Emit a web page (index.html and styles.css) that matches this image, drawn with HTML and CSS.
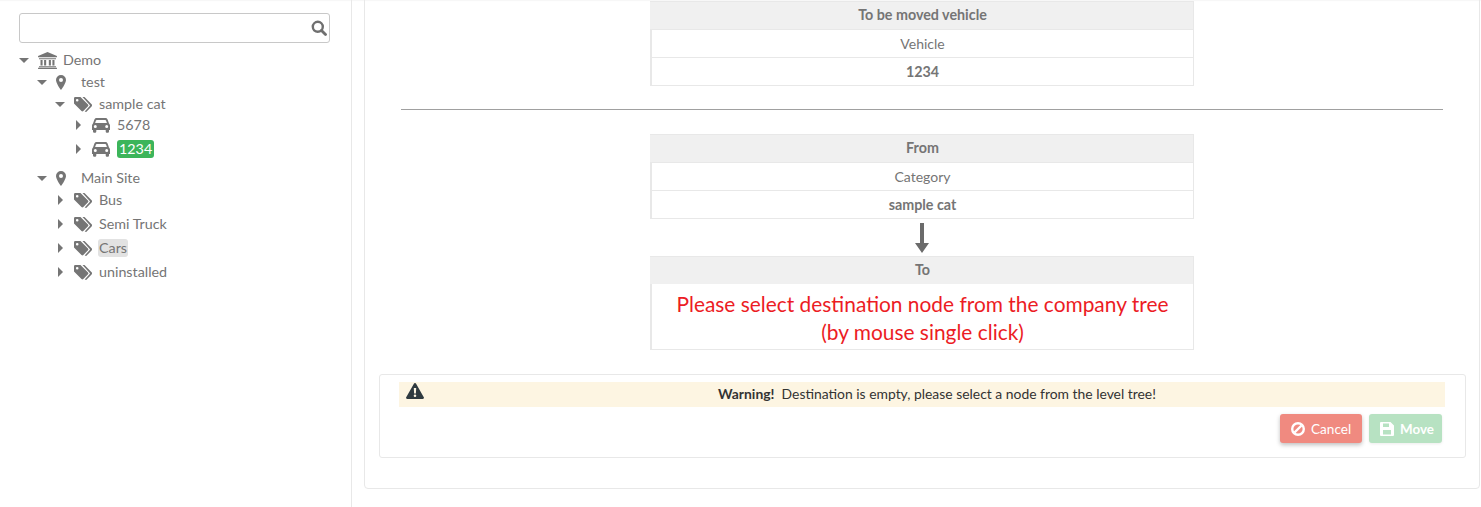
FILE: index.html
```html
<!DOCTYPE html>
<html lang="en">
<head>
<meta charset="utf-8">
<title>Move vehicle</title>
<link rel="stylesheet" href="styles.css">
</head>
<body>
<svg class="defs" width="0" height="0" aria-hidden="true">
  <defs>
    <symbol id="i-bank" viewBox="0 0 20 18"><path d="M10 0 20 4.200V5.500H0V4.200ZM1 6.500h18v1.300H1ZM2.600 8.600h2.200v5.600H2.600ZM6.400 8.600h2.200v5.600H6.400ZM11.400 8.600h2.200v5.600h-2.200ZM15.200 8.600h2.200v5.600h-2.200ZM1 15h18v1.200H1ZM0 16.600h20V18H0Z"/></symbol>
    <symbol id="i-pin" viewBox="0 0 10 15"><path fill-rule="evenodd" d="M5 0a5 5 0 0 1 5 5c0 2.500-3 7.500-5 10C3 12.500 0 7.500 0 5a5 5 0 0 1 5-5Zm0 3a2 2 0 1 0 0 4 2 2 0 0 0 0-4Z"/></symbol>
    <symbol id="i-tags" viewBox="0 0 18 15"><path fill-rule="evenodd" d="M1.200 0H6.500L14 7.500a1.300 1.300 0 0 1 0 1.800L9.300 14a1.300 1.300 0 0 1-1.800 0L0 6.500V1.200A1.200 1.200 0 0 1 1.200 0ZM3.200 2a1.300 1.300 0 1 0 0 2.600 1.300 1.300 0 0 0 0-2.600Z"/><path d="M8.500 0h2l7.100 7.300a1.500 1.500 0 0 1 0 2.100L12.200 15l-1.500-.6 5-5.500a.6.600 0 0 0 0-.9Z"/></symbol>
    <symbol id="i-car" viewBox="0 0 18 15"><path fill-rule="evenodd" d="M4.500 0h9c1 0 1.800.6 2.100 1.500L17 5.400c.6.500 1 1.200 1 2V12h-1v1.500a1.200 1.200 0 0 1-1.200 1.200h-.9a1.200 1.200 0 0 1-1.200-1.200V12H4.300v1.500a1.200 1.200 0 0 1-1.200 1.200h-.9A1.200 1.200 0 0 1 1 13.500V12H0V7.400c0-.8.400-1.500 1-2l1.400-3.900C2.700.6 3.500 0 4.500 0Zm.3 2c-.4 0-.7.200-.8.600L3.100 5h11.800L14 2.600c-.1-.4-.4-.6-.8-.6ZM3.300 7a1.500 1.500 0 1 0 0 3 1.500 1.500 0 0 0 0-3Zm11.400 0a1.500 1.500 0 1 0 0 3 1.500 1.500 0 0 0 0-3Z"/></symbol>
  </defs>
</svg>
<div class="app">
  <aside class="sidebar">
    <div class="search">
      <svg class="search-icon" viewBox="0 0 16 16"><circle cx="6.800" cy="6.800" r="5" fill="none" stroke="currentColor" stroke-width="2.400"/><path d="m10.500 10.500 4 4" stroke="currentColor" stroke-width="2.800" stroke-linecap="round"/></svg>
    </div>
    <ul class="tree">
      <li class="node h22 l0"><i class="caret down"></i><svg class="ic bank"><use href="#i-bank"/></svg><span class="label">Demo</span></li>
      <li class="node h22 l1"><i class="caret down"></i><svg class="ic pin"><use href="#i-pin"/></svg><span class="label">test</span></li>
      <li class="node h22 l2"><i class="caret down"></i><svg class="ic tags"><use href="#i-tags"/></svg><span class="label">sample cat</span></li>
      <li class="node h20 l3"><i class="caret right"></i><svg class="ic car"><use href="#i-car"/></svg><span class="label">5678</span></li>
      <li class="node h28 l3 group-end"><i class="caret right"></i><svg class="ic car"><use href="#i-car"/></svg><span class="label selected">1234</span></li>
      <li class="node h22 l1"><i class="caret down"></i><svg class="ic pin"><use href="#i-pin"/></svg><span class="label">Main Site</span></li>
      <li class="node h22 l2 tail"><i class="caret right"></i><svg class="ic tags"><use href="#i-tags"/></svg><span class="label">Bus</span></li>
      <li class="node h24 l2"><i class="caret right"></i><svg class="ic tags"><use href="#i-tags"/></svg><span class="label">Semi Truck</span></li>
      <li class="node h24 l2"><i class="caret right"></i><svg class="ic tags"><use href="#i-tags"/></svg><span class="label hover">Cars</span></li>
      <li class="node h24 l2"><i class="caret right"></i><svg class="ic tags"><use href="#i-tags"/></svg><span class="label">uninstalled</span></li>
    </ul>
  </aside>
  <main class="main">
    <div class="card">
      <div class="info">
        <div class="info-head">To be moved vehicle</div>
        <div class="info-row">Vehicle</div>
        <div class="info-row strong">1234</div>
      </div>
      <hr class="rule">
      <div class="info">
        <div class="info-head">From</div>
        <div class="info-row">Category</div>
        <div class="info-row strong">sample cat</div>
      </div>
      <div class="arrow-wrap">
        <svg class="arrow" viewBox="0 0 14 30"><path d="M5 0h4v20h5l-7 10-7-10h5Z"/></svg>
      </div>
      <div class="info">
        <div class="info-head">To</div>
        <div class="info-msg">Please select destination node from the company tree<br>(by mouse single click)</div>
      </div>
      <section class="panel">
        <div class="alert">
          <svg class="warn" viewBox="0 0 18 16"><path fill-rule="evenodd" d="M9 0c.5 0 .9.300 1.100.7l7.700 13.500c.5.800-.1 1.800-1.100 1.800H1.300c-1 0-1.600-1-1.100-1.800L7.900.7C8.100.3 8.500 0 9 0ZM7.800 5l.3 5.500h1.800L10.200 5ZM9 11.500a1.300 1.300 0 1 0 0 2.600 1.300 1.300 0 0 0 0-2.600Z"/></svg>
          <span class="alert-text"><b>Warning!</b>&nbsp; Destination is empty, please select a node from the level tree!</span>
        </div>
        <div class="actions">
          <button class="btn cancel" type="button">
            <svg class="btn-ic" viewBox="0 0 14 14"><circle cx="7" cy="7" r="5.800" fill="none" stroke="currentColor" stroke-width="2.400"/><path d="m3.500 10.500 7-7" stroke="currentColor" stroke-width="2.400"/></svg>Cancel
          </button>
          <button class="btn move" type="button">
            <svg class="btn-ic" viewBox="0 0 14 14"><path fill-rule="evenodd" d="M1 0h9.500L14 3.500V13a1 1 0 0 1-1 1H1a1 1 0 0 1-1-1V1a1 1 0 0 1 1-1Zm2 1.500V5h6V1.500ZM3 8v4.500h8V8Z"/></svg>Move
          </button>
        </div>
      </section>
    </div>
  </main>
</div>
</body>
</html>
```

FILE: styles.css
```css
* { box-sizing: border-box; }
html, body { margin: 0; padding: 0; }
body {
  width: 1481px;
  height: 507px;
  overflow: hidden;
  background: #fff;
  color: #757575;
  font-family: "Lato", "Noto Sans", sans-serif;
  font-size: 14px;
}
.defs { position: absolute; }
.app { display: flex; height: 507px; box-shadow: inset 0 2px 2px -2px rgba(0,0,0,.12); }

.sidebar {
  width: 352px;
  flex: none;
  border-right: 1px solid #e8e8e8;
  padding: 13px 21px 0 19px;
}
.search {
  height: 30px;
  border: 1px solid #c8c8c8;
  border-radius: 3px;
  display: flex;
  align-items: center;
  justify-content: flex-end;
  padding-right: 2px;
  background: #fff;
}
.search-icon { width: 16px; height: 16px; color: #6f6f6f; }

.tree { list-style: none; margin: 6px 0 0; padding: 0; font-size: 14.3px; }
.node { display: flex; align-items: center; }
.h20 { height: 20px; }
.h22 { height: 22px; }
.h24 { height: 24px; }
.h28 { height: 28px; }
.group-end { margin-bottom: 4px; }
.tail { margin-bottom: 1px; }
.l0 { padding-left: 0; }
.l1 { padding-left: 18px; }
.l2 { padding-left: 36px; }
.l3 { padding-left: 54px; }

.caret { display: block; flex: none; width: 0; height: 0; }
.caret.down {
  width: 10px;
  border-left: 5px solid transparent;
  border-right: 5px solid transparent;
  border-top: 5px solid #757575;
  margin-right: 9px;
}
.caret.right {
  margin-left: 3px;
  width: 5px;
  border-top: 5px solid transparent;
  border-bottom: 5px solid transparent;
  border-left: 5px solid #757575;
  margin-right: 11px;
}
.ic { display: block; flex: none; fill: #757575; }
.bank { width: 19px; height: 17px; margin-right: 5px; }
.pin { width: 10px; height: 15px; margin-right: 14px; }
.tags { width: 18px; height: 15px; margin-right: 6px; }
.car { width: 18px; height: 15px; margin-right: 6px; }
.label { padding: 0 1px; line-height: 18px; border-radius: 3px; }
.selected { background: #3cb55a; color: #fff; padding: 0 2px; margin-left: 1px; }
.hover { background: #e2e2e2; }

.main { flex: 1; min-width: 0; padding: 0 1px 0 12px; }
.card {
  height: 494px;
  margin-top: -5px;
  padding: 5px 13px 0 14px;
  border: 1px solid #e8e8e8;
  border-radius: 4px;
}
.info {
  width: 544px;
  margin-left: 271px;
  border: 1px solid #e8e8e8;
  border-left-width: 2px;
  text-align: center;
}
.info-head {
  height: 27px;
  line-height: 26px;
  background: #f0f0f0;
  font-weight: 700;
  font-size: 14.3px;
  margin-left: -2px;
  padding-left: 2px;
}
.info-row {
  height: 28px;
  line-height: 27px;
  border-top: 1px solid #e8e8e8;
}
.strong { font-weight: 700; font-size: 14.3px; }
.info-msg {
  height: 65px;
  padding-top: 6px;
  color: #ec1c24;
  font-size: 20.9px;
  line-height: 28px;
}
.rule {
  height: 1px;
  margin: 23px 23px 24px 22px;
  border: 0;
  background: #a0a0a0;
}
.arrow-wrap { width: 544px; margin-left: 271px; height: 37px; display: flex; justify-content: center; align-items: center; }
.arrow { width: 14px; height: 30px; fill: #6b6b6b; }

.panel {
  height: 84px;
  margin-top: 24px;
  padding: 7px 20px 0 19px;
  border: 1px solid #e8e8e8;
  border-radius: 3px;
}
.alert {
  position: relative;
  height: 25px;
  background: #fdf5e2;
  text-align: center;
  line-height: 24px;
  color: #333;
  font-size: 13.9px;
  padding-left: 30px;
}
.alert b { font-weight: 700; }
.warn { position: absolute; left: 7px; top: 1px; width: 18px; height: 16px; fill: #2f3a40; }
.actions { display: flex; justify-content: flex-end; gap: 7px; margin-top: 7px; padding-right: 3px; }
.btn {
  display: flex;
  align-items: center;
  height: 29px;
  border: 0;
  border-radius: 3px;
  color: #fff;
  font: 14px "Lato", "Noto Sans", sans-serif;
  padding: 0 0 0 11px;
  white-space: nowrap;
}
.btn-ic { flex: none; width: 14px; height: 14px; margin-right: 6px; fill: currentColor; }
.cancel { background: #f08a80; box-shadow: 0 2px 4px rgba(0,0,0,.25); width: 82px; font-size: 13.6px; }
.move { background: #b7e2c2; box-shadow: 0 1px 3px rgba(0,0,0,.08); width: 73px; font-size: 13.4px; font-weight: 700; }
```
